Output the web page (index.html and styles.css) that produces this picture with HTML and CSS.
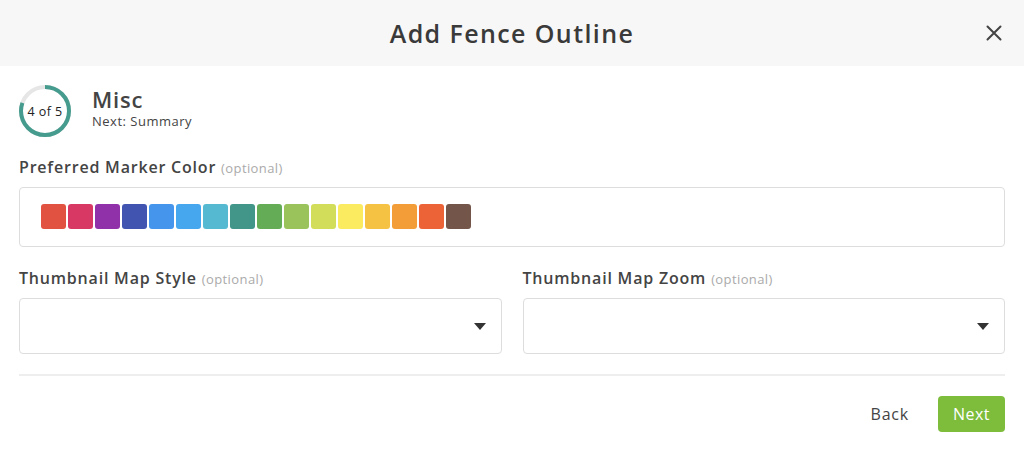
FILE: index.html
```html
<!DOCTYPE html>
<html>
<head>
<meta charset="utf-8">
<link rel="stylesheet" href="styles.css">
</head>
<body>
<div class="modal">
  <header class="modal-header">
    <h1 class="title">Add Fence Outline</h1>
    <button class="close" aria-label="Close">
      <svg width="16" height="16" viewBox="0 0 16 16"><path d="M1.5 1.5 L14.5 14.5 M14.5 1.5 L1.5 14.5" stroke="#444" stroke-width="2" fill="none" stroke-linecap="round"/></svg>
    </button>
  </header>
  <main class="modal-body">
    <div class="step">
      <div class="progress">
        <svg width="52" height="52" viewBox="0 0 52 52">
          <circle cx="26" cy="26" r="24" fill="none" stroke="#e6e6e6" stroke-width="4"/>
          <circle cx="26" cy="26" r="24" fill="none" stroke="#459b8d" stroke-width="4" stroke-dasharray="120.64 150.8" transform="rotate(-90 26 26)"/>
        </svg>
        <span class="progress-text">4 of 5</span>
      </div>
      <div class="step-info">
        <div class="step-name">Misc</div>
        <div class="step-next">Next: Summary</div>
      </div>
    </div>

    <div class="field first">
      <label class="label">Preferred Marker Color <span class="opt">(optional)</span></label>
      <div class="color-box">
        <span class="swatch c1"></span><span class="swatch c2"></span><span class="swatch c3"></span><span class="swatch c4"></span>
        <span class="swatch c5"></span><span class="swatch c6"></span><span class="swatch c7"></span><span class="swatch c8"></span>
        <span class="swatch c9"></span><span class="swatch c10"></span><span class="swatch c11"></span><span class="swatch c12"></span>
        <span class="swatch c13"></span><span class="swatch c14"></span><span class="swatch c15"></span><span class="swatch c16"></span>
      </div>
    </div>

    <div class="row">
      <div class="field col">
        <label class="label">Thumbnail Map Style <span class="opt">(optional)</span></label>
        <div class="select"><span class="caret"></span></div>
      </div>
      <div class="field col">
        <label class="label">Thumbnail Map Zoom <span class="opt">(optional)</span></label>
        <div class="select"><span class="caret"></span></div>
      </div>
    </div>

    <div class="divider"></div>

    <div class="actions">
      <button class="btn-back">Back</button>
      <button class="btn-next">Next</button>
    </div>
  </main>
</div>
</body>
</html>
```

FILE: styles.css
```css
* { box-sizing: border-box; }
html, body { margin: 0; padding: 0; background: #fff; }
body { font-family: "Open Sans", "Liberation Sans", sans-serif; color: #444; }

.modal-header {
  height: 66px;
  background: #f7f7f7;
  display: flex;
  align-items: center;
  justify-content: center;
  position: relative;
}
.title {
  margin: 0 0 1px 0;
  font-size: 25px;
  font-weight: 600;
  color: #3a3a3a;
  letter-spacing: 1.4px;
}
.close {
  position: absolute;
  right: 22px;
  top: 25px;
  border: 0;
  background: none;
  padding: 0;
  width: 16px;
  height: 16px;
  display: block;
}
.close svg { display: block; }

.modal-body { padding: 19px 19px 0 19px; }

.step { display: flex; align-items: flex-start; gap: 21px; }
.progress { position: relative; width: 52px; height: 52px; }
.progress svg { display: block; }
.progress-text {
  position: absolute; inset: 0;
  display: flex; align-items: center; justify-content: center;
  font-size: 12.5px; color: #222; letter-spacing: 0.4px;
}
.step-info { padding-top: 1px; }
.step-name { font-size: 22px; font-weight: 600; color: #444; line-height: 26px; letter-spacing: 0.8px; }
.step-next { font-size: 13px; color: #444; line-height: 16px; margin-top: 1px; letter-spacing: 0.5px; }

.field.first { margin-top: 20px; }
.label { display: block; font-size: 16px; font-weight: 600; color: #444; line-height: 20px; margin-bottom: 9px; letter-spacing: 0.8px; }
.opt { font-size: 13px; font-weight: 400; color: #aaa; letter-spacing: 0.4px; }

.color-box {
  height: 60px;
  border: 1px solid #ddd;
  border-radius: 4px;
  display: flex;
  align-items: center;
  gap: 2px;
  padding-left: 21px;
}
.swatch { width: 25px; height: 25px; border-radius: 3px; display: block; margin-top: -2px; }
.c1 { background: #e25241; }
.c2 { background: #d73964; }
.c3 { background: #9031aa; }
.c4 { background: #4154af; }
.c5 { background: #4595ec; }
.c6 { background: #46a7ee; }
.c7 { background: #55b9d2; }
.c8 { background: #419689; }
.c9 { background: #65ac57; }
.c10 { background: #9ac35c; }
.c11 { background: #d2dd5a; }
.c12 { background: #fbeb61; }
.c13 { background: #f6c244; }
.c14 { background: #f29d38; }
.c15 { background: #ec6337; }
.c16 { background: #74554a; }

.row { display: flex; gap: 21px; }
.col { flex: 1; margin-top: 21px; }
.select {
  height: 56px;
  border: 1px solid #ddd;
  border-radius: 4px;
  position: relative;
}
.caret {
  position: absolute;
  right: 15px;
  top: 24px;
  width: 0; height: 0;
  border-left: 6px solid transparent;
  border-right: 6px solid transparent;
  border-top: 7px solid #333;
}

.divider { height: 2px; background: #eee; margin-top: 20px; }

.actions {
  display: flex;
  justify-content: flex-end;
  align-items: center;
  gap: 29px;
  margin-top: 20px;
}
.btn-back {
  border: 0; background: none; padding: 0;
  font-family: inherit; font-size: 16px; color: #444; letter-spacing: 0.8px;
}
.btn-next {
  border: 0;
  background: #7dbd3b;
  color: #fff;
  font-family: inherit;
  font-size: 16px;
  letter-spacing: 0.5px;
  width: 67px;
  height: 36px;
  border-radius: 4px;
  padding: 0;
}
```
